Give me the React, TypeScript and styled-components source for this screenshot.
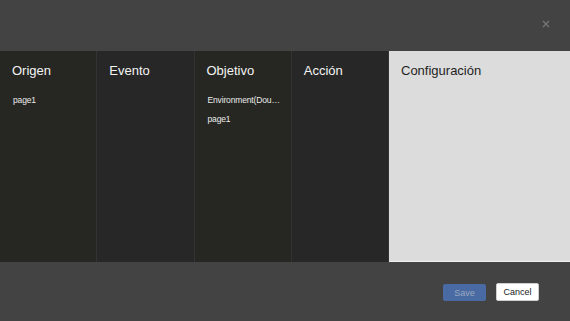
import React from 'react';
import styled, { createGlobalStyle } from 'styled-components';

const Global = createGlobalStyle`
html,body{margin:0;padding:0;background:#434343;}
body{font-family:"Liberation Sans",Arial,sans-serif;}
`;

const Dialog = styled.div`
width:570px;
height:321px;
display:flex;
flex-direction:column;
background:#434343;
`;

const Top = styled.div`
height:51px;
display:flex;
justify-content:flex-end;
align-items:flex-start;
padding:20px 18px 0 0;
box-sizing:border-box;
`;

const Close = styled.button`
width:10px;
height:10px;
padding:0;
border:none;
background:none;
display:flex;
cursor:pointer;
`;

const Body = styled.div`
height:211px;
display:flex;
`;

const Column = styled.div<{ $tint?: boolean }>`
width:96.25px;
flex-shrink:0;
background:${p => (p.$tint ? '#262622' : '#272727')};
border-right:1px solid #333333;
display:flex;
flex-direction:column;
`;

const Title = styled.div<{ $light?: boolean }>`
font-size:13px;
line-height:15px;
color:${p => (p.$light ? '#1f1f1f' : '#f4f4f4')};
padding:12px 12px 0;
height:39px;
box-sizing:border-box;
`;

const Item = styled.div`
font-size:8.5px;
line-height:11px;
letter-spacing:-0.15px;
color:#ececec;
padding:5px 8px 3px 13px;
white-space:nowrap;
overflow:hidden;
text-overflow:ellipsis;
`;

const Config = styled.div`
flex:1;
background:#dcdcdc;
border-bottom:1px solid #f0f0f0;
`;

const Footer = styled.div`
flex:1;
display:flex;
justify-content:flex-end;
align-items:flex-start;
gap:10px;
padding:22px 31px 0 0;
`;

const Button = styled.button<{ $primary?: boolean }>`
width:43px;
margin-top:${p => (p.$primary ? '0' : '-1px')};
height:${p => (p.$primary ? '17px' : '18px')};
border-radius:2px;
font-family:"Liberation Sans",Arial,sans-serif;
font-size:9px;
padding:0;
border:${p => (p.$primary ? '1px solid #4a6aa3' : '1px solid #cfcfcf')};
background:${p => (p.$primary ? '#4a6aa3' : '#ffffff')};
color:${p => (p.$primary ? '#9aa8c0' : '#222222')};
`;

export default function App() {
  return (
    <Dialog>
      <Global />
      <Top>
        <Close aria-label="close">
          <svg width="8" height="8" viewBox="0 0 8 8">
            <path d="M1 1L7 7M7 1L1 7" stroke="#777" strokeWidth="1.3" />
          </svg>
        </Close>
      </Top>
      <Body>
        <Column $tint>
          <Title>Origen</Title>
          <Item>page1</Item>
        </Column>
        <Column>
          <Title>Evento</Title>
        </Column>
        <Column $tint>
          <Title>Objetivo</Title>
          <Item>Environment(DoubleClick)</Item>
          <Item>page1</Item>
        </Column>
        <Column>
          <Title>Acción</Title>
        </Column>
        <Config>
          <Title $light>Configuración</Title>
        </Config>
      </Body>
      <Footer>
        <Button $primary>Save</Button>
        <Button>Cancel</Button>
      </Footer>
    </Dialog>
  );
}
